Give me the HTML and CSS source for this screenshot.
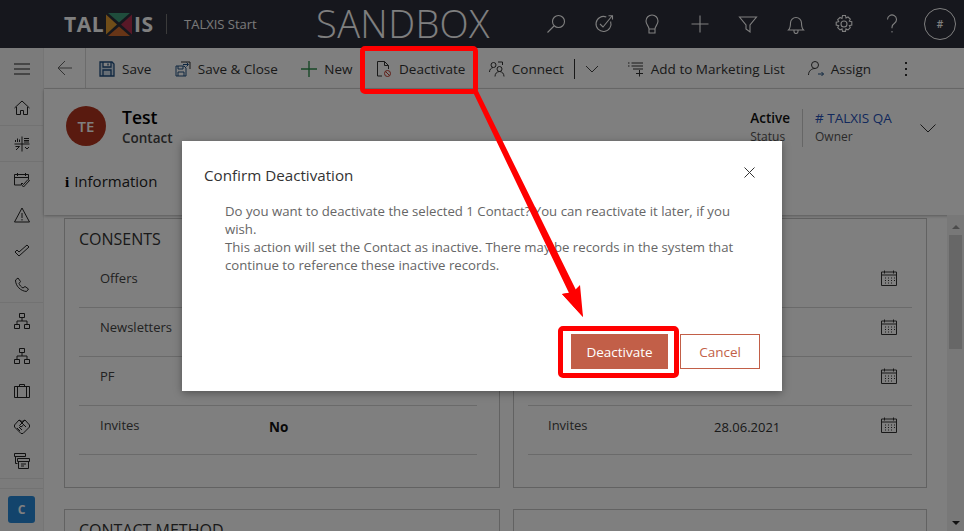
FILE: index.html
```html
<!DOCTYPE html>
<html lang="en">
<head>
<meta charset="utf-8">
<title>Contact: Test</title>
<link rel="stylesheet" href="styles.css">
</head>
<body>
<div class="app">
  <header class="topbar">
    <div class="logo">
      <span class="logo-text">TAL</span>
      <svg class="logo-x" viewBox="0 0 26 23" width="26" height="23">
        <polygon points="2,0 24,0 13,9.500" fill="#3f9a78"/>
        <polygon points="0,1.500 11,11.500 0,21.500" fill="#e09a30"/>
        <polygon points="26,1.500 15,11.500 26,21.500" fill="#b0304e"/>
        <polygon points="2,23 24,23 13,13.500" fill="#cf6a2e"/>
      </svg>
      <span class="logo-text">IS</span>
    </div>
    <span class="logo-sep"></span>
    <span class="app-name">TALXIS Start</span>
    <span class="env">SANDBOX</span>
    <nav class="top-icons">
      <span class="top-icon"><svg viewBox="0 0 20 20"><circle cx="12.500" cy="7.500" r="6"/><path d="M8 12 1.500 18.500"/></svg></span>
      <span class="top-icon"><svg viewBox="0 0 20 20"><path d="M16.600 7.500A7.500 7.500 0 1 1 12.300 3"/><path d="M6 10l3 3 9-11M14.500 1.800h4v3.700"/></svg></span>
      <span class="top-icon"><svg viewBox="0 0 20 20"><path d="M7 15c0-3-3-4-3-8a6 6 0 0 1 12 0c0 4-3 5-3 8ZM7 15v4h6v-4"/></svg></span>
      <span class="top-icon"><svg viewBox="0 0 20 20"><path d="M10 1.500v17M1.500 10h17"/></svg></span>
      <span class="top-icon"><svg viewBox="0 0 20 20"><path d="M1.500 3h17l-6.500 8v7l-4-3v-4Z"/></svg></span>
      <span class="top-icon"><svg viewBox="0 0 20 20"><path d="M2.500 16c2-2 2-4 2-7a5.500 5.500 0 0 1 11 0c0 3 0 5 2 7ZM8 16v1.500a2 2 0 0 0 4 0V16"/></svg></span>
      <span class="top-icon"><svg viewBox="0 0 20 20"><circle cx="10" cy="10" r="3"/><path d="M8.500 1.500h3l.5 2.500 2-1 2.300 2.200-1 2 2.500.5v3.400l-2.500.5 1 2-2.300 2.300-2-1-.5 2.500h-3l-.5-2.500-2 1-2.300-2.300 1-2-2.500-.5V8.200l2.500-.5-1-2L6 3.500l2 1Z"/></svg></span>
      <span class="top-icon"><svg viewBox="0 0 20 20"><path d="M5.500 5.500a4.500 4.500 0 1 1 7 3.700c-1.500 1-2.500 2-2.500 4v1M10 17v1.500"/></svg></span>
    </nav>
    <span class="avatar-slot"><span class="user">#</span></span>
  </header>

  <div class="body-row">
    <aside class="sidebar">
      <div class="side-burger"><svg class="side-ico" viewBox="0 0 16 16"><path d="M0 3h16M0 8h16M0 13h16"/></svg></div>
      <div class="side-item side-sep"><svg class="side-ico" viewBox="0 0 16 16"><path d="M.5 8 8 1l7.500 7M2.500 7v7.500h4v-4h3v4h4V7"/></svg></div>
      <div class="side-item side-sep"><svg class="side-ico" viewBox="0 0 16 16"><path d="M8 .5v15M.5 8h15M1.500 6V4M3.500 6V2.500M5.500 6V3.500M10 2.500h5M10 4.500h5M10 6h5M1.500 10.500h4L2 14M11 11l2 2 2-2"/></svg></div>
      <div class="side-item"><svg class="side-ico" viewBox="0 0 16 16"><path d="M7 13H.5V2.500h14V7M.5 5.500h14M3.500 1v3M11.500 1v3M7 12l2.500 3L15.500 8.500l-1.500-1-4.500 5-1.500-1.500Z"/></svg></div>
      <div class="side-item"><svg class="side-ico" viewBox="0 0 16 16"><path d="M8 1 .5 15h15ZM8 6v5M8 12v1.500"/></svg></div>
      <div class="side-item"><svg class="side-ico" viewBox="0 0 16 16"><path d="m1 10 2-2 2 2 8-7 2 2-10 9Z"/></svg></div>
      <div class="side-item side-sep"><svg class="side-ico" viewBox="0 0 16 16"><path d="M4 1 1.500 3c0 6 5 11 11 11.500l2-2.500-3.500-2.500-2 1.500C7 10 5.500 8 5 6.500L6.500 4.500Z"/></svg></div>
      <div class="side-item"><svg class="side-ico" viewBox="0 0 16 16"><path d="M5.500.5h5v4h-5ZM.5 11.500h5v4h-5ZM10.500 11.500h5v4h-5ZM8 4.500V8M3 11.500V8h10v3.500"/></svg></div>
      <div class="side-item"><svg class="side-ico" viewBox="0 0 16 16"><path d="M5.500.5h5v4h-5ZM.5 11.500h5v4h-5ZM10.500 11.500h5v4h-5ZM8 4.500V8M3 11.500V8h10v3.500"/></svg></div>
      <div class="side-item"><svg class="side-ico" viewBox="0 0 16 16"><path d="M.5 3.500h15v11H.5ZM3.500 3.500v11M12.500 3.500v11M5.500 3.500v-2h5v2"/></svg></div>
      <div class="side-item"><svg class="side-ico" viewBox="0 0 16 16"><path d="M5 2 8 3.500 11 2l4.500 5v2L9 15.500H7L.5 9V7ZM5 2l7 7M11 2 5.500 7.500 7 9l2.500-2M3 10l3 3M5 9l3 3"/></svg></div>
      <div class="side-item side-sep"><svg class="side-ico" viewBox="0 0 16 16"><path d="M.5.500h11v3H.5ZM1.500 3.500v7h2M3.500 5.500h12v3h-12ZM4.500 8.500v7h10v-7M7 11h5M7 13h3"/></svg></div>
      <div class="side-gap"></div>
      <div class="side-tile-row"><span class="tile">C</span></div>
    </aside>

    <div class="main">
      <div class="cmdbar">
        <span class="back"><svg viewBox="0 0 16 16"><path d="M15 8H1M8 1 1 8l7 7"/></svg></span>
        <div class="cmds">
          <span class="cmd"><svg class="ico ico-blue" viewBox="0 0 16 16"><path d="M1 1h12l2 2v12H1ZM4 1v5h8V1M4 15v-6h8v6M9 2.500v2"/></svg><span>Save</span></span>
          <span class="cmd"><svg class="ico" viewBox="0 0 16 16"><path class="ico-blue" d="M1 5h8l2 2v8H1ZM3 5v3h5V5M3 15v-4h6v4"/><path d="M6 1h9v7"/><path class="ico-blue" d="M8 3.500h5M11.500 1.500l2 2-2 2"/></svg><span>Save &amp; Close</span></span>
          <span class="cmd"><svg class="ico ico-green" viewBox="0 0 16 16"><path d="M8 0v16M0 8h16"/></svg><span>New</span></span>
          <span class="cmd"><svg class="ico" viewBox="0 0 16 16"><path d="M6 15H1.500V.5h7l4 4V8M8.500.5v4h4"/><circle class="danger" cx="11.500" cy="12.500" r="3"/><path class="danger" d="m9.500 10.500 4 4"/></svg><span>Deactivate</span></span>
          <span class="cmd cmd-connect"><svg class="ico" viewBox="0 0 16 16"><circle cx="4.500" cy="4" r="2.500"/><path d="M.5 11c0-2.500 1.500-4 3.500-4.500M9 1h4.500v3"/><circle cx="10.500" cy="8" r="2.500"/><path d="M6 15.500c0-3 2-5 4.500-5s4.500 2 4.500 5"/></svg><span>Connect</span></span>
          <span class="split"></span>
          <svg class="chev" viewBox="0 0 14 8"><path d="m1 1 6 6 6-6"/></svg>
          <span class="cmd cmd-add"><svg class="ico" viewBox="0 0 16 16"><path d="M0 2h1.500M3.500 2H15M0 5h1.500M3.500 5H15M5 8h10M11.500 9v6.500M8 12.500h7"/></svg><span>Add to Marketing List</span></span>
          <span class="cmd"><svg class="ico" viewBox="0 0 16 16"><circle cx="7" cy="4" r="3.500"/><path d="M.5 14c0-4 3-6.500 6.500-6.500"/><path class="ico-blue" d="M10 13h5.500M13.500 11l2 2-2 2"/></svg><span>Assign</span></span>
          <span class="more"><i></i><i></i><i></i></span>
        </div>
      </div>

      <section class="record">
        <div class="record-top">
          <span class="rec-avatar">TE</span>
          <div class="rec-name">
            <div class="rec-title">Test</div>
            <div class="rec-type">Contact</div>
          </div>
          <div class="rec-meta">
            <div class="meta-cell">
              <div class="meta-val">Active</div>
              <div class="meta-lbl">Status</div>
            </div>
            <div class="meta-cell meta-owner">
              <div class="meta-link"># TALXIS QA</div>
              <div class="meta-lbl">Owner</div>
            </div>
            <svg class="meta-chev" viewBox="0 0 16 9"><path d="m.5.500 7.500 7.500 7.500-7.500"/></svg>
          </div>
        </div>
        <div class="tabs"><b class="tab-i">i</b><span>Information</span></div>
      </section>

      <div class="scroller">
        <div class="cards">
          <section class="card">
            <h2>CONSENTS</h2>
            <div class="row"><span class="lbl">Offers</span></div>
            <div class="row"><span class="lbl">Newsletters</span></div>
            <div class="row"><span class="lbl">PF</span></div>
            <div class="row"><span class="lbl">Invites</span><b class="val-b">No</b></div>
          </section>
          <section class="card">
            <h2 class="blank">&nbsp;</h2>
            <div class="row row-r"><span class="lbl"></span><span class="val"></span><svg class="cal" viewBox="0 0 16 16"><path d="M.5 2h15v13.500H.5ZM.5 5h15M3.500.5v3M12.500.5v3M4 8h1M7 8h1M10 8h1M13 8h1M4 10.500h1M7 10.500h1M10 10.500h1M13 10.500h1M4 13h1M7 13h1M10 13h1"/></svg></div>
            <div class="row row-r"><span class="lbl"></span><span class="val"></span><svg class="cal" viewBox="0 0 16 16"><path d="M.5 2h15v13.500H.5ZM.5 5h15M3.500.5v3M12.500.5v3M4 8h1M7 8h1M10 8h1M13 8h1M4 10.500h1M7 10.500h1M10 10.500h1M13 10.500h1M4 13h1M7 13h1M10 13h1"/></svg></div>
            <div class="row row-r"><span class="lbl"></span><span class="val"></span><svg class="cal" viewBox="0 0 16 16"><path d="M.5 2h15v13.500H.5ZM.5 5h15M3.500.5v3M12.500.5v3M4 8h1M7 8h1M10 8h1M13 8h1M4 10.500h1M7 10.500h1M10 10.500h1M13 10.500h1M4 13h1M7 13h1M10 13h1"/></svg></div>
            <div class="row row-r"><span class="lbl">Invites</span><span class="val">28.06.2021</span><svg class="cal" viewBox="0 0 16 16"><path d="M.5 2h15v13.500H.5ZM.5 5h15M3.500.5v3M12.500.5v3M4 8h1M7 8h1M10 8h1M13 8h1M4 10.500h1M7 10.500h1M10 10.500h1M13 10.500h1M4 13h1M7 13h1M10 13h1"/></svg></div>
          </section>
          <section class="card card-next"><h2>CONTACT METHOD</h2></section>
          <section class="card card-next"></section>
        </div>
        <div class="scrollbar">
          <span class="arrow-up"></span>
          <span class="thumb"></span>
          <span class="arrow-down"></span>
        </div>
      </div>
    </div>
  </div>
</div>

<div class="overlay">
  <div class="dialog">
    <div class="dlg-head">
      <span class="dlg-title">Confirm Deactivation</span>
      <svg class="dlg-x" viewBox="0 0 11 11"><path d="m.5.500 10 10M10.500.500l-10 10"/></svg>
    </div>
    <p class="dlg-text">Do you want to deactivate the selected 1 Contact? You can reactivate it later, if you wish.<br>This action will set the Contact as inactive. There may be records in the system that continue to reference these inactive records.</p>
    <div class="dlg-actions">
      <button class="btn btn-primary">Deactivate</button>
      <button class="btn btn-ghost">Cancel</button>
    </div>
  </div>
</div>

<div class="mark mark-cmd"></div>
<div class="mark mark-btn"></div>
<svg class="mark-arrow" viewBox="0 0 964 531" width="964" height="531">
  <polygon points="472.500,91 477,89 576,290 583,317 562,294 569,293" fill="#f00" stroke="none"/>
  <polygon points="583,317 562,294 573,292 580,285" fill="#f00" stroke="none"/>
</svg>
</body>
</html>
```
FILE: styles.css
```css
* { box-sizing: border-box; }
html, body { margin: 0; height: 100%; }
body {
  width: 964px;
  height: 531px;
  overflow: hidden;
  position: relative;
  font-family: "Open Sans", "Noto Sans", sans-serif;
  font-size: 13px;
  color: #333;
  background: #fff;
}
svg { display: block; fill: none; stroke: currentColor; }
.app { display: flex; flex-direction: column; height: 531px; }

/* top bar */
.topbar { height: 48px; flex: none; display: flex; align-items: center; background: #2c2e3a; color: #fff; padding-left: 64px; }
.logo { display: flex; align-items: center; width: 102px; height: 34px; }
.logo-sep { width: 1px; height: 20px; background: #777; flex: none; }
.logo-text { font-weight: 700; font-size: 21px; color: #fff; letter-spacing: .5px; }
.logo-x { margin: 0 2px 0 2px; stroke: none; flex: none; }
.app-name { margin-left: 17px; width: 132px; font-size: 13px; color: #f2f2f2; }
.env { font-weight: 300; font-size: 38px; line-height: 46px; margin-bottom: 2px; color: #fff; letter-spacing: .4px; }
.top-icons { margin-left: auto; display: flex; }
.top-icon { width: 48px; height: 48px; display: flex; align-items: center; justify-content: center; }
.top-icon svg { width: 20px; height: 20px; stroke: #fff; stroke-width: 1.1; }
.avatar-slot { width: 48px; height: 48px; display: flex; align-items: center; justify-content: center; }
.user { width: 32px; height: 32px; border: 1px solid #fff; border-radius: 50%; display: flex; align-items: center; justify-content: center; font-size: 10px; font-weight: 600; }

.body-row { flex: 1; display: flex; min-height: 0; }

/* sidebar */
.sidebar { width: 44px; flex: none; background: #f6f6f6; border-right: 1px solid #ebebeb; display: flex; flex-direction: column; }
.side-burger { height: 42px; flex: none; display: flex; align-items: center; justify-content: center; }
.side-item { height: 35px; flex: none; display: flex; align-items: center; justify-content: center; }
.side-sep { height: 36px; border-bottom: 1px solid #e4e4e4; }
.side-ico { width: 16px; height: 16px; stroke: #222; stroke-width: 1; }
.side-gap { flex: none; height: 10px; border-bottom: 1px solid #e4e4e4; }
.side-tile-row { padding: 7px 8px; }
.tile { display: flex; align-items: center; justify-content: center; width: 27px; height: 27px; border-radius: 3px; background: #2688d8; color: #fff; font-weight: 700; font-size: 12px; }

/* main */
.main { flex: 1; min-width: 0; display: flex; flex-direction: column; }
.cmdbar { height: 41px; flex: none; display: flex; align-items: center; border-bottom: 1px solid #d8d8d8; }
.back { width: 42px; height: 41px; flex: none; border-right: 1px solid #d8d8d8; display: flex; align-items: center; justify-content: center; color: #666; }
.back svg { width: 16px; height: 16px; stroke-width: 1; }
.cmds { display: flex; align-items: center; padding: 1px 0 0 13px; color: #333; }
.cmd { display: flex; align-items: center; gap: 7px; margin-right: 23.500px; white-space: nowrap; font-size: 13.500px; }
.ico { width: 16px; height: 16px; flex: none; stroke: #333; stroke-width: 1; }
.ico-blue { stroke: #1f4e80; }
svg.ico-blue { stroke-width: 1.3; fill: #cfdcea; }
.ico-green { stroke: #2f8f4e; stroke-width: 1.4; }
.danger { stroke: #c0392b; }
.cmd-connect { margin-right: 10px; }
.split { width: 1px; height: 20px; background: #333; margin-right: 10px; }
.chev { width: 14px; height: 8px; stroke: #444; stroke-width: 1; margin-right: 29px; }
.cmd-add { margin-right: 23px; }
.more { display: flex; flex-direction: column; gap: 4px; margin-left: 10px; }
.more i { width: 2px; height: 2px; background: #333; display: block; }

/* record header */
.record { height: 126px; flex: none; padding: 17px 0 0 22px; box-shadow: 0 1px 3px rgba(0,0,0,.3); position: relative; background: #fff; }
.record-top { display: flex; height: 40px; }
.rec-avatar { width: 40px; height: 40px; border-radius: 50%; background: #b3351f; color: #fff; display: flex; align-items: center; justify-content: center; font-weight: 600; font-size: 15px; flex: none; }
.rec-name { margin-left: 16px; margin-top: -1px; }
.rec-title { font-size: 17.500px; font-weight: 600; color: #000; line-height: 24px; }
.rec-type { font-size: 13.500px; font-weight: 600; color: #444; line-height: 18px; }
.rec-meta { margin-left: auto; margin-right: 28px; display: flex; align-items: flex-start; margin-top: 3px; }
.meta-cell { line-height: 18px; }
.meta-owner { border-left: 1px solid #ccc; margin-left: 12px; padding-left: 12px; width: 118px; height: 38px; }
.meta-val { font-size: 13.500px; font-weight: 600; color: #111; }
.meta-link { font-size: 13.500px; font-weight: 500; color: #2450b8; }
.meta-lbl { font-size: 12px; color: #555; margin-top: 1px; }
.meta-chev { width: 16px; height: 9px; margin-top: 15px; stroke: #333; stroke-width: 1; }
.tabs { display: flex; align-items: baseline; gap: 5px; margin-top: 25px; font-size: 15px; color: #222; }
.tab-i { font-family: "Liberation Serif", serif; font-size: 15px; color: #000; margin-left: -1px; }

/* form */
.scroller { flex: 1; min-height: 0; display: flex; overflow: hidden; }
.cards { flex: 1; display: grid; grid-template-columns: 436px 414px; grid-auto-rows: 270px; gap: 21px 13px; padding: 3px 0 0 20px; align-content: start; }
.card { border: 1px solid #c4c4c4; padding: 0 14px; height: 270px; }
.card h2 { margin: 9px 0 0; font-size: 16px; font-weight: 400; line-height: 22px; height: 31px; color: #333; }
.row { height: 49px; border-bottom: 1px solid #d4d4d4; display: flex; padding-left: 21px; padding-top: 10px; position: relative; color: #444; font-size: 13px; line-height: 18px; }
.card:first-child .row { margin-right: 8px; }
.val-b { position: absolute; left: 190px; top: 12px; font-weight: 700; font-size: 13.500px; color: #111; }
.val { position: absolute; left: 186px; top: 12px; color: #333; }
.cal { position: absolute; right: 15px; top: 11px; width: 16px; height: 16px; stroke: #333; stroke-width: 1; }
.row-r { padding-left: 20px; }
.scrollbar { width: 17px; flex: none; background: #f1f1f1; display: flex; flex-direction: column; align-items: center; padding-top: 10px; position: relative; }
.arrow-up { width: 0; height: 0; border: 4px solid transparent; border-top: 0; border-bottom: 4px solid #999; }
.thumb { width: 13px; height: 114px; background: #cfcfcf; margin-top: 6px; }
.arrow-down { position: absolute; bottom: 6px; width: 0; height: 0; border: 4px solid transparent; border-bottom: 0; border-top: 4px solid #222; }

/* dialog */
.overlay { position: absolute; inset: 0; background: rgba(0,0,0,.5); display: flex; align-items: center; justify-content: center; }
.dialog { width: 600px; height: 250px; background: #fff; box-shadow: 0 2px 8px rgba(0,0,0,.35); display: flex; flex-direction: column; }
.dlg-head { display: flex; align-items: center; justify-content: space-between; padding: 22px 27px 0 22px; }
.dlg-title { font-size: 15.200px; color: #333; line-height: 24px; }
.dlg-x { width: 11px; height: 11px; stroke: #333; stroke-width: 1; margin-top: -4px; }
.dlg-text { margin: 15px 24px 0 43px; font-size: 13.200px; line-height: 18px; color: #666; }
.dlg-actions { margin-top: auto; padding: 0 22px 22px 0; display: flex; justify-content: flex-end; gap: 12px; }
.btn { height: 35px; font: 13.500px "Open Sans", sans-serif; padding: 1px 0 0; border: 1px solid #c25f48; }
.btn-primary { width: 97px; background: #c25f48; color: #fff; }
.btn-ghost { width: 80px; background: #fff; color: #c25f48; }

/* annotations */
.mark { position: absolute; border: 5px solid #f00; border-radius: 5px; }
.mark-cmd { left: 360px; top: 46px; width: 118px; height: 48px; }
.mark-btn { left: 558px; top: 326px; width: 121px; height: 52px; }
.mark-arrow { position: absolute; left: 0; top: 0; }
```
